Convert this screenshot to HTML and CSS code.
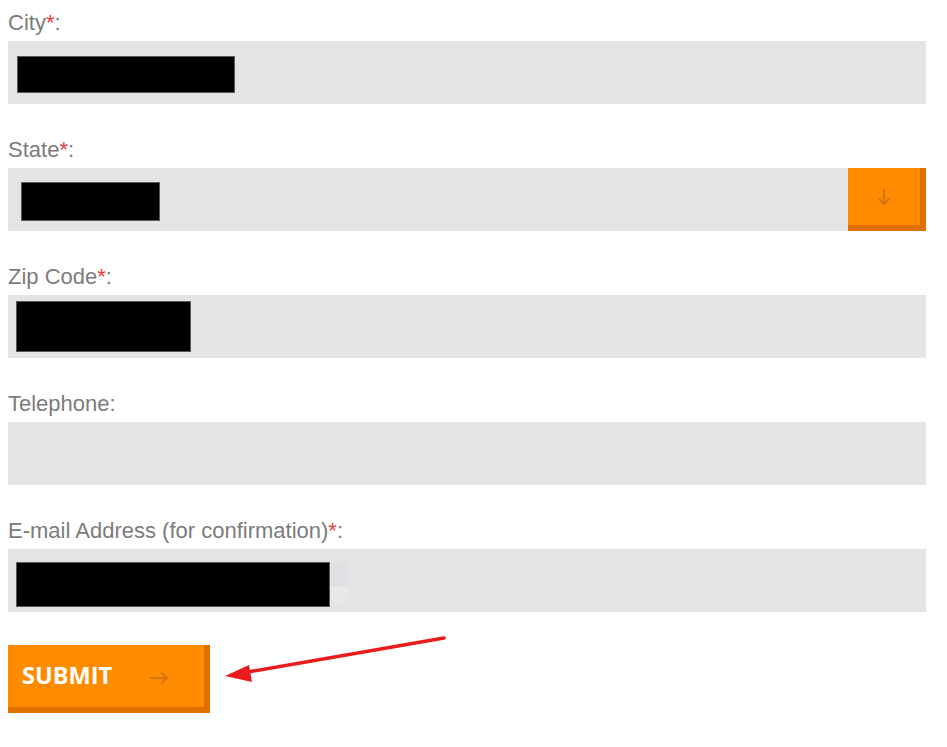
FILE: index.html
```html
<!DOCTYPE html>
<html lang="en">
<head>
<meta charset="utf-8">
<title>Form</title>
<link rel="stylesheet" href="styles.css">
</head>
<body>
<form class="form">
  <div class="field">
    <label class="label">City<span class="req">*</span>:</label>
    <div class="input"><span class="redact redact-city"></span></div>
  </div>
  <div class="field">
    <label class="label">State<span class="req">*</span>:</label>
    <div class="input input-select">
      <span class="redact redact-state"></span>
      <span class="select-btn">
        <svg width="14" height="18" viewBox="0 0 14 18" aria-hidden="true"><path d="M7 1 V16 M1.5 10.5 L7 16 L12.5 10.5" fill="none" stroke="#d67414" stroke-width="2"/></svg>
      </span>
    </div>
  </div>
  <div class="field">
    <label class="label">Zip Code<span class="req">*</span>:</label>
    <div class="input"><span class="redact redact-zip"></span></div>
  </div>
  <div class="field">
    <label class="label">Telephone:</label>
    <div class="input"></div>
  </div>
  <div class="field field-last">
    <label class="label">E-mail Address (for confirmation)<span class="req">*</span>:</label>
    <div class="input"><span class="autofill"><span class="redact redact-email"></span></span></div>
  </div>
  <button type="button" class="submit">
    <span class="submit-text">SUBMIT</span>
    <svg class="submit-arrow" width="20" height="14" viewBox="0 0 20 14" aria-hidden="true"><path d="M1 7 H18 M12 1.5 L18 7 L12 12.5" fill="none" stroke="#d67414" stroke-width="2"/></svg>
  </button>
</form>
<svg class="annotation" width="947" height="747" viewBox="0 0 947 747" aria-hidden="true">
  <line x1="444" y1="638" x2="242" y2="673" stroke="#ea1b1b" stroke-width="3.5" stroke-linecap="round"/>
  <polygon points="225,676 249,665 252,682" fill="#ea1b1b"/>
</svg>
</body>
</html>
```

FILE: styles.css
```css
html, body {
  margin: 0;
  padding: 0;
  background: #ffffff;
}

body {
  position: relative;
  width: 947px;
  height: 747px;
  overflow: hidden;
  font-family: "Liberation Sans", Arial, sans-serif;
}

.form {
  display: flex;
  flex-direction: column;
  align-items: flex-start;
  padding: 11px 0 0 8px;
  width: 918px;
}

.field {
  display: flex;
  flex-direction: column;
  width: 918px;
  margin-bottom: 34px;
}

.field-last {
  margin-bottom: 33px;
}

.label {
  display: block;
  font-size: 22px;
  line-height: 24px;
  color: #7c7c7c;
  margin-bottom: 6px;
}

.req {
  color: #ee3b3b;
}

.input {
  display: flex;
  align-items: flex-start;
  height: 63px;
  background: #e4e4e4;
  box-sizing: border-box;
}

.input-select {
  justify-content: space-between;
  align-items: stretch;
}

.redact {
  display: block;
  background: #000;
  border: 1px solid #5a5a5a;
  box-sizing: border-box;
}

.redact-city {
  margin: 15px 0 0 9px;
  width: 218px;
  height: 37px;
}

.redact-state {
  margin: 14px 0 0 13px;
  width: 139px;
  height: 39px;
  align-self: flex-start;
}

.redact-zip {
  margin: 6px 0 0 8px;
  width: 175px;
  height: 51px;
}

.autofill {
  display: block;
  margin: 13px 0 0 8px;
  width: 332px;
  height: 40px;
  background: linear-gradient(#dfe0e3 0, #dfe0e3 24px, #e8e8e8 24px);
}

.redact-email {
  width: 314px;
  height: 45px;
}

.select-btn {
  display: flex;
  align-items: center;
  justify-content: center;
  width: 78px;
  box-sizing: border-box;
  background: #ff8c00;
  border-right: 6px solid #e07000;
  border-bottom: 6px solid #e07000;
}

.submit {
  display: flex;
  align-items: center;
  width: 202px;
  height: 68px;
  box-sizing: border-box;
  padding: 0 0 0 14px;
  margin: 0;
  background: #ff8c00;
  border: 0;
  border-right: 6px solid #e07000;
  border-bottom: 6px solid #e07000;
  font-family: "Open Sans", "Liberation Sans", sans-serif;
  font-weight: 700;
  font-size: 23.5px;
  color: #ffffff;
  cursor: pointer;
}

.submit-text {
  line-height: 1;
}

.submit-arrow {
  margin-left: 37px;
  margin-top: 4px;
}

.annotation {
  position: absolute;
  left: 0;
  top: 0;
  pointer-events: none;
}
```
